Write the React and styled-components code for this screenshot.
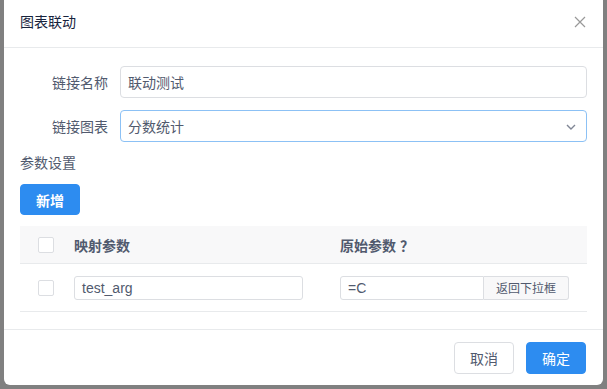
import React from 'react';
import styled, { createGlobalStyle } from 'styled-components';

const GlobalStyle = createGlobalStyle`
  html, body {
    margin: 0;
    padding: 0;
    background: #808080;
    font-family: "Liberation Sans", "Noto Sans CJK SC", sans-serif;
  }
  * { box-sizing: border-box; }
`;

const Page = styled.div`
  width: 607px;
  height: 389px;
  padding: 0 4px;
  overflow: hidden;
`;

const Modal = styled.div`
  width: 599px;
  height: 385px;
  background: #fff;
  border-radius: 0 0 6px 6px;
  display: flex;
  flex-direction: column;
`;

const Header = styled.div`
  height: 48px;
  padding: 0 17px 3px 16px;
  border-bottom: 1px solid #e8eaec;
  display: flex;
  align-items: center;
  justify-content: space-between;
`;

const Title = styled.div`
  font-size: 14px;
  color: #17233d;
  line-height: 20px;
`;

const Close = styled.svg`
  width: 12px;
  height: 12px;
`;

const Body = styled.div`
  flex: 1;
  padding: 18px 16px 0 16px;
`;

const FormRow = styled.div`
  display: flex;
  align-items: center;
  margin-bottom: 12px;
`;

const Label = styled.div`
  width: 100px;
  padding-right: 12px;
  text-align: right;
  font-size: 14px;
  color: #515a6e;
`;

const Field = styled.div`
  position: relative;
  width: 467px;
  height: 32px;
  border: 1px solid ${p => (p.focus ? '#8cc1f5' : '#dcdee2')};
  border-radius: 4px;
  padding: 0 7px;
  display: flex;
  align-items: center;
  font-size: 14px;
  color: #515a6e;
`;

const Arrow = styled.svg`
  position: absolute;
  right: 10px;
  top: 13px;
  width: 10px;
  height: 6px;
`;

const Section = styled.div`
  margin-top: -2px;
  font-size: 14px;
  line-height: 22px;
  color: #515a6e;
`;

const Button = styled.button`
  height: ${p => p.h || 31}px;
  width: 60px;
  border-radius: 4px;
  font-family: inherit;
  font-size: 14px;
  cursor: pointer;
  border: 1px solid ${p => (p.primary ? '#2d8cf0' : '#dcdee2')};
  background: ${p => (p.primary ? '#2d8cf0' : '#fff')};
  color: ${p => (p.primary ? '#fff' : '#515a6e')};
  font-weight: ${p => (p.bold ? 600 : 400)};
`;

const AddWrap = styled.div`
  margin-top: 10px;
`;

const Table = styled.div`
  margin-top: 11px;
  width: 567px;
`;

const TRow = styled.div`
  display: grid;
  grid-template-columns: 54px 266px 1fr;
  align-items: center;
  height: ${p => p.h}px;
  background: ${p => p.bg || '#fff'};
  border-bottom: 1px solid #e8eaec;
`;

const Check = styled.span`
  justify-self: center;
  margin-left: -2px;
  width: 16px;
  height: 16px;
  border: 1px solid #dcdee2;
  border-radius: 2px;
  background: #fff;
`;

const Th = styled.div`
  font-size: 14px;
  font-weight: 700;
  color: #515a6e;
`;

const CellInput = styled.div`
  width: 229px;
  height: 24px;
  border: 1px solid #dcdee2;
  border-radius: 3px;
  padding: 0 7px;
  display: flex;
  align-items: center;
  font-size: 14px;
  color: #515a6e;
`;

const Group = styled.div`
  width: 229px;
  height: 24px;
  display: flex;
`;

const GroupInput = styled(CellInput)`
  width: 144px;
  border-radius: 3px 0 0 3px;
`;

const Append = styled.div`
  flex: 1;
  border: 1px solid #dcdee2;
  border-left: none;
  border-radius: 0 3px 3px 0;
  background: #f8f8f9;
  font-size: 12px;
  color: #515a6e;
  display: flex;
  align-items: center;
  justify-content: center;
`;

const Footer = styled.div`
  height: 56px;
  border-top: 1px solid #e8eaec;
  padding: 12px 17px 0 0;
  display: flex;
  justify-content: flex-end;
  align-items: flex-start;
  gap: 12px;
`;

export default function App() {
  return (
    <Page>
      <GlobalStyle />
      <Modal>
        <Header>
          <Title>图表联动</Title>
          <Close viewBox="0 0 12 12">
            <path d="M1 1 L11 11 M11 1 L1 11" stroke="#999" strokeWidth="1.2" fill="none" />
          </Close>
        </Header>
        <Body>
          <FormRow>
            <Label>链接名称</Label>
            <Field>联动测试</Field>
          </FormRow>
          <FormRow>
            <Label>链接图表</Label>
            <Field focus>
              分数统计
              <Arrow viewBox="0 0 10 6">
                <path d="M1 1 L5 5 L9 1" stroke="#808695" strokeWidth="1.4" fill="none" />
              </Arrow>
            </Field>
          </FormRow>
          <Section>参数设置</Section>
          <AddWrap>
            <Button primary bold>新增</Button>
          </AddWrap>
          <Table>
            <TRow h={38} bg="#f8f8f9">
              <Check />
              <Th>映射参数</Th>
              <Th>原始参数 ？</Th>
            </TRow>
            <TRow h={48}>
              <Check />
              <CellInput>test_arg</CellInput>
              <Group>
                <GroupInput>=C</GroupInput>
                <Append>返回下拉框</Append>
              </Group>
            </TRow>
          </Table>
        </Body>
        <Footer>
          <Button h={32}>取消</Button>
          <Button h={32} primary>确定</Button>
        </Footer>
      </Modal>
    </Page>
  );
}
